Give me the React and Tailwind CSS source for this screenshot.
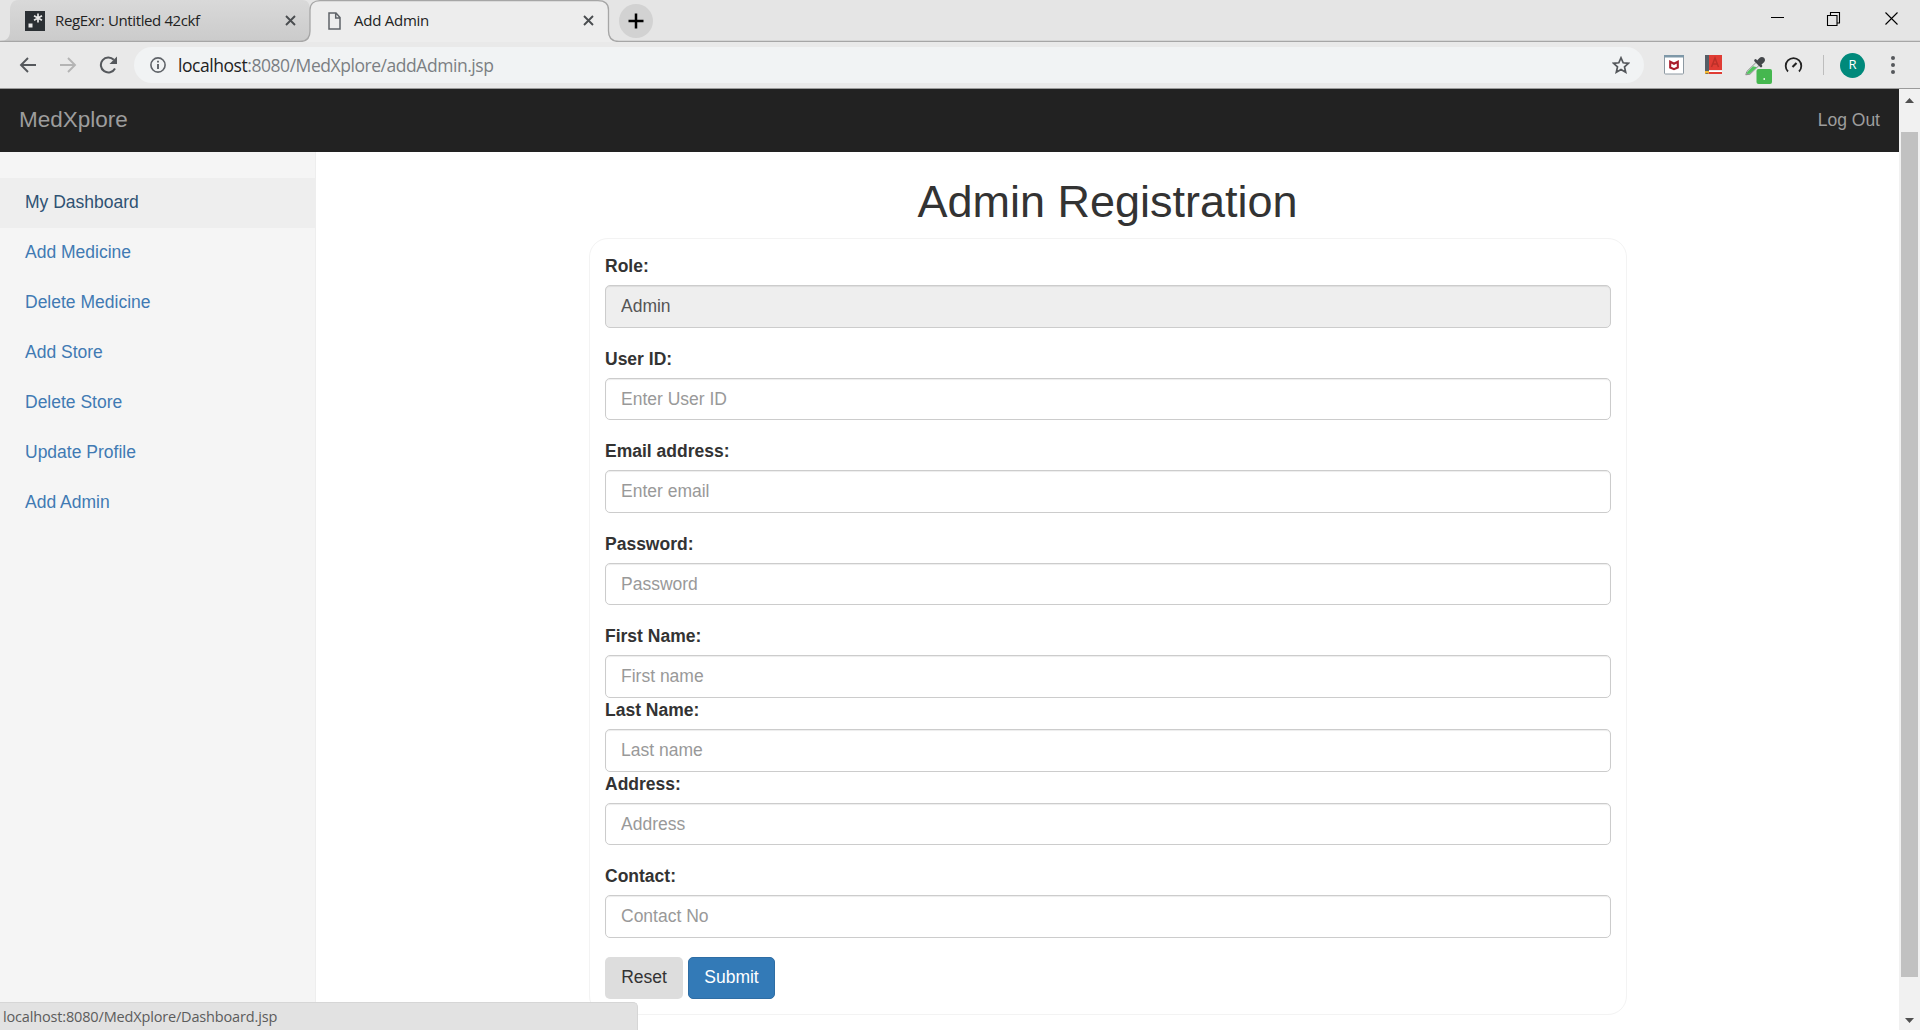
import React from "react";

const links = ["My Dashboard", "Add Medicine", "Delete Medicine", "Add Store", "Delete Store", "Update Profile", "Add Admin"];

const fields = [
  { label: "Role:", value: "Admin", disabled: true, gap: true },
  { label: "User ID:", placeholder: "Enter User ID", gap: true },
  { label: "Email address:", placeholder: "Enter email", gap: true },
  { label: "Password:", placeholder: "Password", type: "password", gap: true },
  { label: "First Name:", placeholder: "First name" },
  { label: "Last Name:", placeholder: "Last name" },
  { label: "Address:", placeholder: "Address", gap: true },
  { label: "Contact:", placeholder: "Contact No", gap: true },
];

function TabClose() {
  return (
    <svg className="h-[11px] w-[11px] shrink-0" viewBox="0 0 11 11" stroke="#4a4d50" strokeWidth="1.9">
      <path d="M1 1l9 9M10 1l-9 9" />
    </svg>
  );
}

function TabStrip() {
  return (
    <div className="relative h-[42px] bg-[#e5e5e5]">
      <svg className="absolute inset-0" width="1920" height="42" viewBox="0 0 1920 42" fill="none">
        <defs>
          <linearGradient id="idle" x1="0" y1="0" x2="0" y2="1">
            <stop offset="0" stopColor="#d9d9d9" />
            <stop offset="1" stopColor="#cbcbcb" />
          </linearGradient>
        </defs>
        <path d="M0 41C6 41 10 38 10 31V10C10 4 13 0 18 0H302C308 0 310 4 310 10V41Z" fill="url(#idle)" />
        <path d="M300 42C307 42 310 38 310 31V10C310 4 314 1 320 1H598C605 1 608 4 608 10V31C608 38 612 42 619 42Z" fill="#ededed" />
        <path d="M0 41.5H300C307 41.5 310 38 310 31V10C310 4 314 .7 320 .7H598C605 .7 608.5 4 608.5 10V31C608.5 38 612 41.5 619 41.5H1920" stroke="#a6a6a6" strokeWidth="1.3" />
      </svg>
      <div className="relative flex h-full items-center">
        <div className="flex h-full w-[310px] items-center pr-[14px] pb-px pl-[25px]">
          <svg className="h-5 w-5 shrink-0" viewBox="0 0 20 20">
            <rect width="20" height="20" fill="#2b3034" />
            <rect x="3.5" y="12.5" width="4" height="4" fill="#e8e8e8" />
            <path d="M13 2.5v9M9 4.7l8 4.6M17 4.7l-8 4.6" stroke="#e8e8e8" strokeWidth="1.7" />
          </svg>
          <span className="mb-[2px] ml-[10px] flex-1 text-[15px] leading-[20px] tracking-[-0.38px] text-[#222]">RegExr: Untitled 42ckf</span>
          <TabClose />
        </div>
        <div className="flex h-full w-[298px] items-center pr-[14px] pb-px pl-[18px]">
          <svg className="h-[18px] w-[13px] shrink-0" viewBox="0 0 13 18" fill="none" stroke="#5f6368" strokeWidth="1.5">
            <path d="M1 1h7l4 4.5V17H1zM7.7 1v5H12" />
          </svg>
          <span className="mb-[2px] ml-[13px] flex-1 text-[15px] leading-[20px] tracking-[-0.25px] text-[#222]">Add Admin</span>
          <TabClose />
        </div>
        <div className="ml-[11px] flex h-[34px] w-[34px] items-center justify-center rounded-full bg-[#d2d2d2]">
          <svg className="h-4 w-4" viewBox="0 0 16 16" stroke="#000" strokeWidth="2.5">
            <path d="M8 .5v15M.5 8h15" />
          </svg>
        </div>
        <svg className="mr-[20px] mb-[5px] ml-auto h-[15px] w-[130px]" viewBox="0 0 130 15" fill="none" stroke="#000" strokeWidth="1.1">
          <path d="M1 6.5h13M57.5 4.5h9.5v10H57.5zM60.5 4.5v-3H69.5V12H67.5" />
          <path d="M115.5 1.5l12 12M127.5 1.5l-12 12" />
        </svg>
      </div>
    </div>
  );
}

function Toolbar() {
  return (
    <div className="flex h-[47px] items-center border-b border-[#9a9a9a] bg-[#e9e9e9]">
      <svg className="ml-[19px] h-4 w-[17px]" viewBox="0 0 17 16" fill="none" stroke="#55585c" strokeWidth="1.9">
        <path d="M17 8H2M9 1L2 8l7 7" />
      </svg>
      <svg className="ml-[24px] h-4 w-[17px]" viewBox="0 0 17 16" fill="none" stroke="#b4b4b4" strokeWidth="1.9">
        <path d="M0 8h15M8 1l7 7-7 7" />
      </svg>
      <svg className="ml-[22px] h-[18px] w-[19px]" viewBox="0 0 19 18" fill="none" stroke="#55585c" strokeWidth="2">
        <path d="M16 12.5A7.5 7.5 0 1 1 14.8 3.8" />
        <path d="M18 .5v7.5h-7.5z" fill="#55585c" stroke="none" />
      </svg>
      <div className="ml-[16px] flex h-[36px] w-[1510px] items-center rounded-full bg-[#f1f3f4] pr-[14px] pl-[16px]">
        <svg className="h-4 w-4" viewBox="0 0 16 16" fill="none" stroke="#5f6368" strokeWidth="1.6">
          <circle cx="8" cy="8" r="7.1" />
          <path d="M8 7v5M8 3.8v1.8" strokeWidth="1.9" />
        </svg>
        <span className="mb-px ml-[12px] flex-1 text-[17.5px] leading-[24px] tracking-[-0.45px] text-[#7b7f83]">
          <span className="text-[#222]">localhost</span>:8080/MedXplore/addAdmin.jsp
        </span>
        <svg className="h-[18px] w-[18px]" viewBox="0 0 18 18" fill="none" stroke="#55585c" strokeWidth="1.7">
          <path d="M9 1.8l2.2 5 5.3.5-4 3.6 1.2 5.3L9 13.4l-4.7 2.8 1.2-5.3-4-3.6 5.3-.5z" />
        </svg>
      </div>
      <svg className="ml-[20px] h-5 w-5" viewBox="0 0 20 20">
        <rect x=".5" y=".5" width="19" height="18.5" rx="1" fill="#fff" stroke="#8d99a2" />
        <path d="M0 0h20v2.5H0z" fill="#7e98a8" />
        <path d="M6.2 6.8L10 8.8l3.8-2v5.7L10 14.2l-3.8-1.7z" fill="none" stroke="#a91c2b" strokeWidth="2.1" />
      </svg>
      <svg className="ml-[20px] h-5 w-[19px]" viewBox="0 0 19 20">
        <path d="M1 0h4v19H1z" fill="#555e66" />
        <path d="M5 0h13v15H5z" fill="#e03c34" />
        <path d="M5 16h13v1H5z" fill="#fff" />
        <path d="M5 17h13v2H5z" fill="#e03c34" />
        <path d="M7.5 12l3.5-9 3.5 9M8.8 9h4.4" stroke="#bb3028" strokeWidth="1.5" fill="none" />
        <path d="M1 16h4v3l-2-1-2 1z" fill="#f2b632" />
      </svg>
      <svg className="mt-[10px] ml-[22px] h-[29px] w-[28px]" viewBox="0 0 28 29">
        <path d="M.8 18.8l1-3.3L11.5 6l3 3L5 18.2z" fill="#e4e7e5" stroke="#777" strokeWidth=".8" />
        <path d="M1.5 18l1-2.3 5.5-5.4 4 1-7.5 6.4z" fill="#51c55f" />
        <path d="M10.5 4.5l5.5 5.5" stroke="#44474b" strokeWidth="2.6" strokeLinecap="round" />
        <path d="M12 4.500l2.500-2.500c1.600-1.800 5.500-1.200 5.500 2 0 1.300-.7 2-1.500 2.700L16 9z" fill="#44474b" />
        <rect x="11.5" y="13" width="15.5" height="15" rx="2" fill="#45b74f" />
        <rect x="18.5" y="22" width="1.5" height="2" fill="#d9f3db" />
      </svg>
      <svg className="ml-[11px] h-[17px] w-[19px]" viewBox="0 0 19 17" fill="none" stroke="#222" strokeWidth="1.8">
        <path d="M4 14.5A7.8 7.8 0 1 1 15 14.5" />
        <path d="M8.5 10L12.5 6" strokeWidth="2.2" />
      </svg>
      <div className="ml-[20px] h-5 w-px bg-[#bdbdbd]" />
      <div className="ml-[16px] flex h-[25px] w-[25px] items-center justify-center rounded-full bg-[#00897b] text-[13px] text-white">R</div>
      <div className="ml-[26px] flex flex-col gap-[3px]">
        <i className="h-[4px] w-[4px] rounded-full bg-[#55585c]" />
        <i className="h-[4px] w-[4px] rounded-full bg-[#55585c]" />
        <i className="h-[4px] w-[4px] rounded-full bg-[#55585c]" />
      </div>
    </div>
  );
}

function Field({ label, value, placeholder, disabled, gap, type = "text" }) {
  return (
    <div className={gap ? "mb-[18.75px]" : ""}>
      <label className="mb-[6.25px] block font-bold">{label}</label>
      <input
        type={type}
        defaultValue={value}
        placeholder={placeholder}
        disabled={disabled}
        className="block h-[42.5px] w-full rounded-[5px] border border-[#ccc] bg-white px-[15px] pt-[8px] pb-[7.5px] text-[#555] shadow-[inset_0_1px_1px_rgba(0,0,0,0.075)] placeholder:text-[#999] disabled:bg-[#eee]"
      />
    </div>
  );
}

export default function App() {
  return (
    <div className="relative flex h-[1030px] w-[1920px] flex-col overflow-hidden bg-white font-['Open_Sans',sans-serif]">
      <TabStrip />
      <Toolbar />
      <div className="flex min-h-0 flex-1 font-['Liberation_Sans',Arial,sans-serif] text-[17.5px] leading-[25px] text-[#333]">
        <div className="flex flex-1 flex-col">
          <nav className="flex h-[63px] shrink-0 items-center justify-between bg-[#222] px-[19px] text-[#9d9d9d]">
            <span className="mb-[2px] text-[22.5px]">MedXplore</span>
            <span>Log Out</span>
          </nav>
          <div className="flex min-h-0 flex-1">
            <aside className="w-[316px] shrink-0 border-r border-[#eee] bg-[#f5f5f5] pt-[26px]">
              {links.map((text, i) => (
                <a key={text} className={i === 0 ? "block bg-[#eee] px-[25px] pt-[11.5px] pb-[13.5px] text-[#2f5273]" : "block px-[25px] pt-[11.5px] pb-[13.5px] text-[#417ab3]"}>
                  {text}
                </a>
              ))}
            </aside>
            <main className="flex-1 pl-[273px]">
              <h1 className="mt-[25px] mb-[12px] w-[1037px] text-center text-[45px] leading-[49px]">Admin Registration</h1>
              <form className="h-[777px] w-[1038px] rounded-[19px] border border-[#f3f3f3] pt-[15px] pr-[15px] pl-[15px]">
                {fields.map((f) => (
                  <Field key={f.label} {...f} />
                ))}
                <div className="flex gap-[5px]">
                  <button type="button" className="h-[42.5px] w-[78px] rounded-[5px] bg-[#ddd] text-[#333]">Reset</button>
                  <button type="button" className="h-[42.5px] w-[87px] rounded-[5px] border border-[#2e6da4] bg-[#337ab7] text-white">Submit</button>
                </div>
              </form>
            </main>
          </div>
        </div>
        <div className="flex w-[21px] flex-col items-center bg-[#f1f1f1]">
          <svg className="mt-[9px] h-[5px] w-[9px]" viewBox="0 0 9 5"><path d="M0 5L4.5 0 9 5z" fill="#505050" /></svg>
          <div className="mt-[29px] h-[845px] w-[17px] bg-[#c1c1c1]" />
          <svg className="mt-[41px] h-[5px] w-[9px]" viewBox="0 0 9 5"><path d="M0 0L4.5 5 9 0z" fill="#505050" /></svg>
        </div>
      </div>
      <div className="absolute bottom-0 left-0 flex h-[28px] w-[638px] items-center rounded-tr-[5px] border-t border-r border-[#d6d6d6] bg-[#e2e2e2] pl-[3px] text-[14.5px] tracking-[-0.16px] text-[#5c5c5c]">
        localhost:8080/MedXplore/Dashboard.jsp
      </div>
    </div>
  );
}
